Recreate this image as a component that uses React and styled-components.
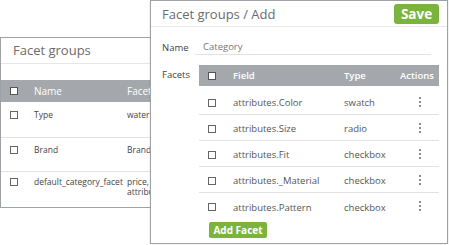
import React from "react";
import styled, { createGlobalStyle } from "styled-components";

const Global = createGlobalStyle`
  html, body {
    margin: 0;
    padding: 0;
    background: #fff;
  }
  body {
    font-family: "Open Sans", "Liberation Sans", sans-serif;
    color: #555;
  }
`;

const groups = [
  { name: "Type", facets: ["water"], h: 36, pt: 8 },
  { name: "Brand", facets: ["Brand"], h: 34, pt: 7 },
  { name: "default_category_facet", facets: ["price, a", "attribu"], h: 34, pt: 5 },
];

const facets = [
  { field: "attributes.Color", type: "swatch" },
  { field: "attributes.Size", type: "radio" },
  { field: "attributes.Fit", type: "checkbox" },
  { field: "attributes._Material", type: "checkbox" },
  { field: "attributes.Pattern", type: "checkbox" },
];

function Kebab() {
  return (
    <KebabWrap>
      <Dot />
      <Dot />
      <Dot />
    </KebabWrap>
  );
}

export default function App() {
  return (
    <>
      <Global />
      <Desk>
        <BackWindow>
          <BackTitle>Facet groups</BackTitle>
          <BackSpacer />
          <BackHead>
            <BackCheckCell>
              <Check light />
            </BackCheckCell>
            <NameCell>Name</NameCell>
            <FacetCell>Facets</FacetCell>
          </BackHead>
          {groups.map((g) => (
            <BackRow key={g.name} style={{ height: g.h, paddingTop: g.pt }}>
              <BackCheckCell>
                <Check />
              </BackCheckCell>
              <NameCell>{g.name}</NameCell>
              <FacetCell>
                {g.facets.map((f) => (
                  <div key={f}>{f}</div>
                ))}
              </FacetCell>
            </BackRow>
          ))}
        </BackWindow>

        <FrontWindow>
          <FrontHeader>
            <FrontTitle>Facet groups / Add</FrontTitle>
            <SaveButton>Save</SaveButton>
          </FrontHeader>
          <Body>
            <NameRow>
              <Label>Name</Label>
              <Input>Category</Input>
            </NameRow>
            <FacetsRow>
              <Label>Facets</Label>
              <Table>
                <Head>
                  <CheckCol>
                    <Check light />
                  </CheckCol>
                  <FieldCol>Field</FieldCol>
                  <TypeCol>Type</TypeCol>
                  <ActionCol>Actions</ActionCol>
                </Head>
                <Rows>
                  {facets.map((f, i) => (
                    <Row key={f.field} last={i === facets.length - 1}>
                      <CheckCol>
                        <Check />
                      </CheckCol>
                      <FieldCol>{f.field}</FieldCol>
                      <TypeCol>{f.type}</TypeCol>
                      <ActionCol center>
                        <Kebab />
                      </ActionCol>
                    </Row>
                  ))}
                </Rows>
                <AddButton>Add Facet</AddButton>
              </Table>
            </FacetsRow>
          </Body>
        </FrontWindow>
      </Desk>
    </>
  );
}

const Desk = styled.div`
  position: relative;
  width: 449px;
  height: 245px;
  overflow: hidden;
`;

const BackWindow = styled.div`
  position: absolute;
  left: 0;
  top: 37px;
  width: 230px;
  height: 169px;
  border: 1px solid #9ea2a6;
  background: #fff;
`;

const BackTitle = styled.div`
  height: 25px;
  line-height: 25px;
  padding-left: 12px;
  font-size: 13px;
  color: #6b6b6b;
  border-bottom: 1px solid #e6e6e6;
`;

const BackSpacer = styled.div`
  height: 16px;
`;

const BackHead = styled.div`
  display: flex;
  align-items: center;
  height: 22px;
  background: #a4a8ac;
  color: #fff;
  font-size: 10px;
`;

const BackRow = styled.div`
  display: flex;
  align-items: flex-start;
  box-sizing: border-box;
  border-bottom: 1px solid #e2e2e2;
  font-size: 8.5px;
  color: #444;
  line-height: 10px;
  &:last-child {
    border-bottom: none;
  }
`;

const BackCheckCell = styled.div`
  width: 33px;
  padding-left: 9px;
  box-sizing: border-box;
  display: flex;
  align-items: center;
  height: 10px;
`;

const NameCell = styled.div`
  width: 93px;
`;

const FacetCell = styled.div`
  flex: 1;
`;

const Check = styled.span`
  display: inline-block;
  width: 6px;
  height: 6px;
  border: 1px solid ${(p) => (p.light ? "#555" : "#666")};
  background: #fff;
`;

const FrontWindow = styled.div`
  position: absolute;
  left: 150px;
  top: 0;
  width: 296px;
  height: 242px;
  border: 1px solid #9ea2a6;
  background: #fff;
  box-shadow: 0 0 2px rgba(0, 0, 0, 0.15);
`;

const FrontHeader = styled.div`
  display: flex;
  align-items: center;
  justify-content: space-between;
  height: 25px;
  padding: 0 8px 0 11px;
  border-bottom: 1px solid #e8e8e8;
`;

const FrontTitle = styled.div`
  font-size: 13px;
  color: #6b6b6b;
`;

const SaveButton = styled.div`
  width: 45px;
  height: 20px;
  margin-top: 1px;
  border-radius: 3px;
  background: #7ab43c;
  color: #fff;
  font-weight: 700;
  font-size: 13.5px;
  line-height: 20px;
  text-align: center;
`;

const Body = styled.div`
  padding: 10px 8px 0 11px;
`;

const NameRow = styled.div`
  display: flex;
  align-items: center;
  height: 20px;
`;

const Label = styled.div`
  width: 33px;
  font-size: 9.5px;
  color: #444;
`;

const Input = styled.div`
  width: 236px;
  height: 16px;
  line-height: 16px;
  padding-left: 8px;
  box-sizing: border-box;
  border-bottom: 1px solid #e2e2e2;
  font-size: 9.5px;
  color: #777;
`;

const FacetsRow = styled.div`
  display: flex;
  align-items: flex-start;
  margin-top: 8px;
  & > ${Label} {
    padding-top: 3px;
    width: 37px;
  }
`;

const Table = styled.div`
  width: 240px;
`;

const Head = styled.div`
  display: flex;
  align-items: center;
  height: 21px;
  background: #a4a8ac;
  color: #fff;
  font-size: 9.5px;
  font-weight: 600;
`;

const Rows = styled.div`
  margin-top: 3px;
`;

const Row = styled.div`
  display: flex;
  align-items: center;
  box-sizing: border-box;
  height: 26px;
  padding-top: 2px;
  border-bottom: ${(p) => (p.last ? "none" : "1px solid #e2e2e2")};
  font-size: 9.5px;
  color: #555;
`;

const CheckCol = styled.div`
  width: 34px;
  padding-left: 9px;
  box-sizing: border-box;
  display: flex;
  align-items: center;
`;

const FieldCol = styled.div`
  width: 111px;
`;

const TypeCol = styled.div`
  width: 56px;
`;

const ActionCol = styled.div`
  flex: 1;
  display: flex;
  justify-content: ${(p) => (p.center ? "center" : "flex-start")};
`;

const KebabWrap = styled.div`
  display: flex;
  flex-direction: column;
  gap: 2px;
  margin-top: -2px;
`;

const Dot = styled.span`
  width: 2px;
  height: 2px;
  border-radius: 50%;
  background: #666;
`;

const AddButton = styled.div`
  width: 58px;
  height: 16px;
  margin: 3px 0 0 10px;
  border-radius: 2px;
  background: #7ab43c;
  color: #fff;
  font-weight: 700;
  font-size: 10px;
  line-height: 16px;
  text-align: center;
`;
